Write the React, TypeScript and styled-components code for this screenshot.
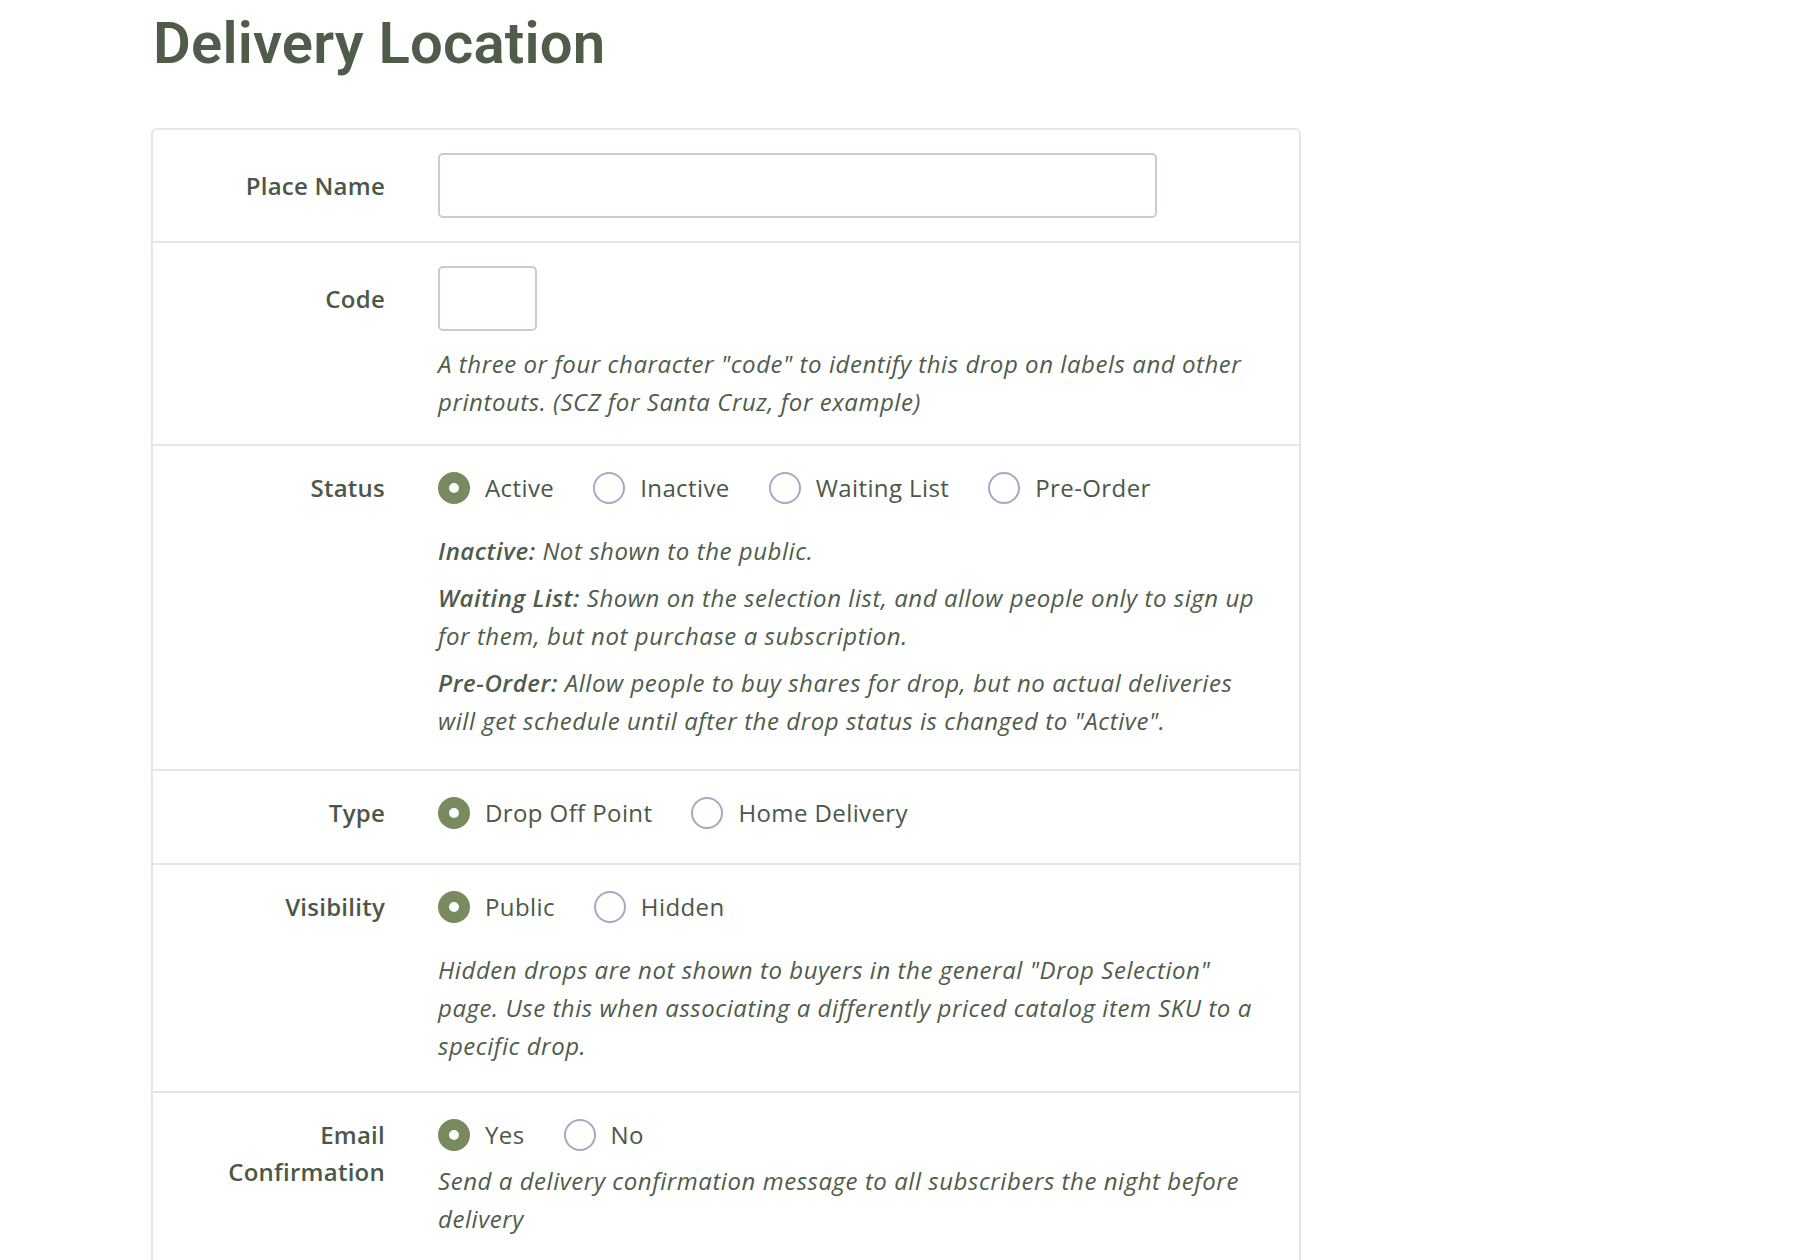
import React from "react";
import styled, { createGlobalStyle } from "styled-components";

const GlobalStyle = createGlobalStyle`
  html, body {
    margin: 0;
    padding: 0;
    background: #ffffff;
  }
  body {
    font-family: "Open Sans", "Noto Sans", Arial, sans-serif;
    color: #4b5848;
  }
`;

const Page = styled.main`
  padding: 8px 0 0 151px;
  width: 1150px;
`;

const Title = styled.h1`
  margin: 0 0 50px 2px;
  font-family: Roboto, "Open Sans", sans-serif;
  font-size: 58px;
  line-height: 70px;
  font-weight: 600;
  color: #4f5c4a;
  letter-spacing: 0.2px;
`;

const Card = styled.section`
  border: 2px solid #e2e4ef;
  border-radius: 6px;
  background: #fff;
`;

const Row = styled.div<{ $padBottom?: number }>`
  display: grid;
  grid-template-columns: 232px 1fr;
  column-gap: 53px;
  padding: 23px 30px ${(p) => p.$padBottom ?? 23}px 0;
  border-top: 2px solid #e2e4ef;

  &:first-child {
    border-top: none;
  }
`;

const Label = styled.label<{ $tall?: boolean }>`
  text-align: right;
  font-size: 24px;
  letter-spacing: 0.25px;
  font-weight: 600;
  line-height: 37px;
  padding-top: ${(p) => (p.$tall ? 14 : 0)}px;
`;

const Field = styled.div`
  display: flex;
  flex-direction: column;
  align-items: flex-start;
`;

const TextInput = styled.input<{ $width: number }>`
  box-sizing: border-box;
  width: ${(p) => p.$width}px;
  height: 65px;
  border: 2px solid #c5d0c3;
  border-radius: 5px;
  background: #fff;
  outline: none;
  font: inherit;
  padding: 0 14px;
`;

const Help = styled.p<{ $top?: number; $bottom?: number }>`
  margin: ${(p) => p.$top ?? 9}px 0 ${(p) => p.$bottom ?? 0}px;
  font-size: 24px;
  letter-spacing: 0.55px;
  line-height: 38px;
  font-style: italic;
  color: #4f5c4b;

  strong {
    font-weight: 600;
  }
`;

const RadioGroup = styled.div<{ $bottom?: number }>`
  display: flex;
  align-items: center;
  gap: 39px;
  height: 38px;
  margin-bottom: ${(p) => p.$bottom ?? 0}px;
`;

const Option = styled.label`
  display: flex;
  align-items: center;
  gap: 15px;
  font-size: 24px;
  letter-spacing: 0.4px;
  line-height: 38px;
  color: #4b5848;
`;

const Dot = styled.span<{ $checked?: boolean }>`
  box-sizing: border-box;
  width: 32px;
  height: 32px;
  border-radius: 50%;
  flex: none;
  border: ${(p) => (p.$checked ? "11px solid #788a5e" : "2px solid #a2abc6")};
  background: #fff;
`;

type RadioProps = { options: string[]; checked: string; bottom?: number };

const Radios = ({ options, checked, bottom }: RadioProps) => (
  <RadioGroup $bottom={bottom}>
    {options.map((o) => (
      <Option key={o}>
        <Dot $checked={o === checked} />
        {o}
      </Option>
    ))}
  </RadioGroup>
);

export default function App() {
  return (
    <>
      <GlobalStyle />
      <Page>
        <Title>Delivery Location</Title>
        <Card>
          <Row>
            <Label $tall>Place Name</Label>
            <Field>
              <TextInput $width={719} />
            </Field>
          </Row>
          <Row>
            <Label $tall>Code</Label>
            <Field>
              <TextInput $width={99} />
              <Help $top={14}>
                A three or four character "code" to identify this drop on labels
                and other printouts. (SCZ for Santa Cruz, for example)
              </Help>
            </Field>
          </Row>
          <Row $padBottom={29}>
            <Label>Status</Label>
            <Field>
              <Radios
                options={["Active", "Inactive", "Waiting List", "Pre-Order"]}
                checked="Active"
                bottom={16}
              />
              <Help>
                <strong>Inactive:</strong> Not shown to the public.
              </Help>
              <Help>
                <strong>Waiting List:</strong> Shown on the selection list, and
                allow people only to sign up for them, but not purchase a
                subscription.
              </Help>
              <Help>
                <strong>Pre-Order:</strong> Allow people to buy shares for drop,
                but no actual deliveries will get schedule until after the drop
                status is changed to "Active".
              </Help>
            </Field>
          </Row>
          <Row $padBottom={31}>
            <Label>Type</Label>
            <Field>
              <Radios
                options={["Drop Off Point", "Home Delivery"]}
                checked="Drop Off Point"
              />
            </Field>
          </Row>
          <Row $padBottom={26}>
            <Label>Visibility</Label>
            <Field>
              <Radios options={["Public", "Hidden"]} checked="Public" bottom={16} />
              <Help>
                Hidden drops are not shown to buyers in the general "Drop
                Selection" page. Use this when associating a differently priced
                catalog item SKU to a specific drop.
              </Help>
            </Field>
          </Row>
          <Row $padBottom={36}>
            <Label>
              Email
              <br />
              Confirmation
            </Label>
            <Field>
              <Radios options={["Yes", "No"]} checked="Yes" />
              <Help $top={8}>
                Send a delivery confirmation message to all subscribers the
                night before delivery
              </Help>
            </Field>
          </Row>
        </Card>
      </Page>
    </>
  );
}
